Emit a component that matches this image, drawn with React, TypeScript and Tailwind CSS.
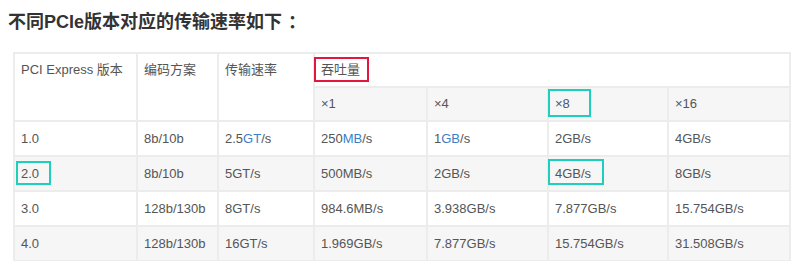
import React from 'react';

type Tone = 'red' | 'teal';

// annotation frame drawn over a cell's text
const Mark = ({ children, tone, className }: { children: React.ReactNode; tone: Tone; className: string }) => (
  <span className="relative inline-block">
    {children}
    <span
      className={`absolute border-2 ${tone === 'red' ? 'border-[#e3173e]' : 'border-[#1fcfbd]'} ${className}`}
    />
  </span>
);

const Blue = ({ children }: { children: React.ReactNode }) => (
  <span className="text-[#3a7fc6]">{children}</span>
);

const cell = "border-2 border-[#ececec] px-[6px] text-left align-middle font-normal";

const rows: React.ReactNode[][] = [
  ['1.0', '8b/10b', <>2.5<Blue>GT</Blue>/s</>, <>250<Blue>MB</Blue>/s</>, <>1<Blue>GB</Blue>/s</>, '2GB/s', '4GB/s'],
  [
    <Mark tone="teal" className="-left-[5px] -right-[12px] -top-[3px] -bottom-[1px]">2.0</Mark>,
    '8b/10b', '5GT/s', '500MB/s', '2GB/s',
    <Mark tone="teal" className="-left-[7px] -right-[13px] -top-[5px] -bottom-[1px]">4GB/s</Mark>,
    '8GB/s',
  ],
  ['3.0', '128b/130b', '8GT/s', '984.6MB/s', '3.938GB/s', '7.877GB/s', '15.754GB/s'],
  ['4.0', '128b/130b', '16GT/s', '1.969GB/s', '7.877GB/s', '15.754GB/s', '31.508GB/s'],
  // next row only peeks in under the fold
  ['', '', '', '', '', '', ''],
];

export default function App() {
  return (
    <div className="w-[800px] h-[261px] overflow-hidden bg-white font-['Liberation_Sans','Noto_Sans_CJK_SC',sans-serif]">
      <h2 className="pl-[8px] pt-[10px] text-[18px] leading-[24px] font-bold text-[#333]">
        不同PCIe版本对应的传输速率如下<span className="ml-[6px]">：</span>
      </h2>
      <table className="mt-[18px] ml-[13px] w-[776px] table-fixed border-collapse text-[13px] leading-[20px] text-[#555]">
        <colgroup>
          <col className="w-[123px]" />
          <col className="w-[81px]" />
          <col className="w-[96px]" />
          <col className="w-[113px]" />
          <col className="w-[121px]" />
          <col className="w-[120px]" />
          <col className="w-[122px]" />
        </colgroup>
        <thead>
          <tr className="h-[34px]">
            <th rowSpan={2} className={`${cell} align-top pt-[6px]`}>PCI Express 版本</th>
            <th rowSpan={2} className={`${cell} align-top pt-[6px]`}>编码方案</th>
            <th rowSpan={2} className={`${cell} align-top pt-[6px]`}>传输速率</th>
            <th colSpan={4} className={cell}>
              <Mark tone="red" className="-left-[7px] -right-[9px] -top-[3px] -bottom-[2px]">吞吐量</Mark>
            </th>
          </tr>
          <tr className="h-[34px] bg-[#f6f6f6]">
            <th className={cell}>×1</th>
            <th className={cell}>×4</th>
            <th className={cell}>
              <Mark tone="teal" className="-left-[7px] -right-[21px] -top-[5px] -bottom-[3px]">×8</Mark>
            </th>
            <th className={cell}>×16</th>
          </tr>
        </thead>
        <tbody>
          {rows.map((r, i) => (
            <tr key={i} className={`h-[35px] ${i % 2 === 1 ? 'bg-[#f6f6f6]' : 'bg-white'}`}>
              {r.map((c, j) => (
                <td key={j} className={cell}>{c}</td>
              ))}
            </tr>
          ))}
        </tbody>
      </table>
    </div>
  );
}
